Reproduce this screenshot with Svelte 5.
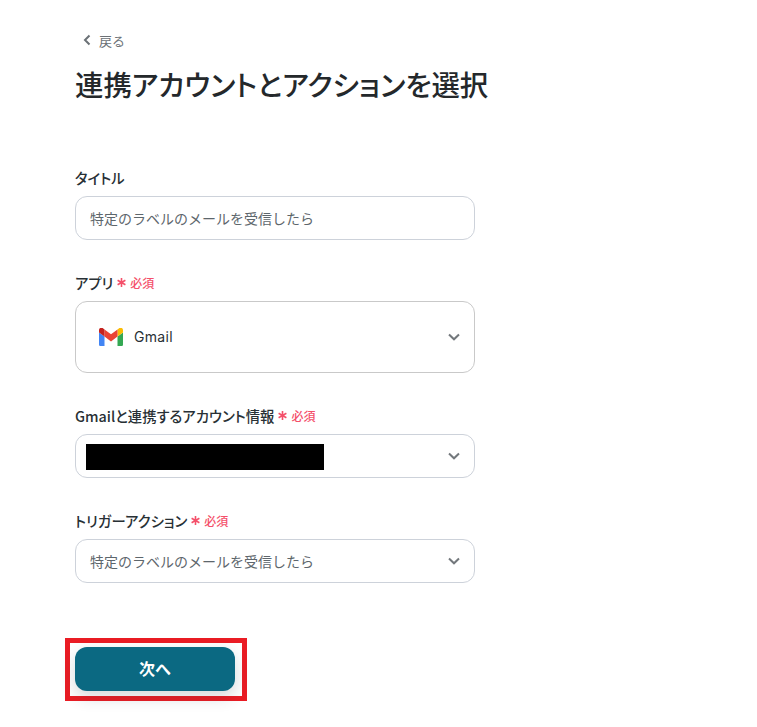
<script lang="ts">
    const triggerName = "特定のラベルのメールを受信したら";
</script>

{#snippet chevron()}
    <svg class="chevron" width="12" height="8" viewBox="0 0 12 8"><path d="M1 1.5 6 6.3 11 1.5" fill="none" stroke="currentColor" stroke-width="2"/></svg>
{/snippet}

{#snippet required()}
    <svg class="star" width="9" height="9" viewBox="0 0 9 9"><path d="M4.5 0V9M.6 2.25 8.4 6.75M.6 6.75 8.4 2.25" fill="none" stroke="currentColor" stroke-width="1.6"/></svg>
    <em>必須</em>
{/snippet}

<main class="page">
    <a class="back" href="#back">
        <svg width="10" height="12" viewBox="0 0 10 12"><path d="M7.5 1.5 3 6l4.5 4.5" fill="none" stroke="currentColor" stroke-width="2"/></svg>
        <span>戻る</span>
    </a>
    <h1>連携アカウントとアクションを選択</h1>

    <section class="field first">
        <div class="label"><span>タイトル</span></div>
        <div class="box"><span>{triggerName}</span></div>
    </section>

    <section class="field">
        <div class="label"><span>アプリ</span>{@render required()}</div>
        <div class="box tall">
            <svg class="gmail" width="24" height="18" viewBox="0 0 24 18">
                <path d="M1.6 18H5.5V8.5L0 4.4V16.4C0 17.3.7 18 1.6 18Z" fill="#4285f4"/>
                <path d="M18.5 18H22.4C23.3 18 24 17.3 24 16.4V4.4L18.5 8.5Z" fill="#34a853"/>
                <path d="M18.5 1.4V8.5L24 4.4V2.2C24 .2 21.7-1 20.1.2Z" fill="#fbbc04"/>
                <path d="M5.5 8.5V1.4L12 6.3 18.5 1.4V8.5L12 13.4Z" fill="#ea4335"/>
                <path d="M0 2.2V4.4L5.5 8.5V1.4L3.9.2C2.3-1 0 .2 0 2.2Z" fill="#c5221f"/>
            </svg>
            <span class="app-name">Gmail</span>
            {@render chevron()}
        </div>
    </section>

    <section class="field">
        <div class="label"><span>Gmailと連携するアカウント情報</span>{@render required()}</div>
        <div class="box redacted-box">
            <div class="redacted"></div>
            {@render chevron()}
        </div>
    </section>

    <section class="field">
        <div class="label"><span>トリガーアクション</span>{@render required()}</div>
        <div class="box">
            <span>{triggerName}</span>
            {@render chevron()}
        </div>
    </section>

    <div class="next-wrap">
        <button class="next">次へ</button>
    </div>
</main>

<style>
    :global(body) {
        background: #fff;
    }

    .page {
        box-sizing: border-box;
        width: 757px;
        height: 727px;
        overflow: hidden;
        padding: 30px 0 0 75px;
        font-family: "Noto Sans CJK JP", "Noto Sans", sans-serif;
        color: #283035;
    }

    .back {
        display: flex;
        align-items: center;
        gap: 7px;
        height: 20px;
        padding-left: 7px;
        font-size: 13px;
        color: #6b7176;
        text-decoration: none;
    }

    h1 {
        margin: 14px 0 0;
        font-size: 28.4px;
        line-height: 40px;
        font-weight: 500;
        color: #24282b;
        font-feature-settings: "palt";
    }

    .field {
        margin-top: 33px;
    }

    .field.first {
        margin-top: 64px;
    }

    .label {
        display: flex;
        align-items: center;
        height: 18px;
        margin-bottom: 10px;
        font-size: 14.35px;
        font-weight: 500;
        font-feature-settings: "palt";
    }

    .star {
        margin-left: 4px;
        color: #f4506a;
    }

    .label em {
        margin-left: 4px;
        font-style: normal;
        font-size: 12px;
        font-weight: 500;
        color: #f4506a;
    }

    .box {
        box-sizing: border-box;
        position: relative;
        display: flex;
        align-items: center;
        width: 400px;
        height: 44px;
        padding: 0 14px;
        border: 1px solid #cdd2da;
        border-radius: 12px;
        font-size: 14px;
        color: #5d666c;
    }

    .box.tall {
        height: 72px;
        padding-left: 23px;
        border-color: #c9c9c9;
    }

    .box.redacted-box {
        padding-left: 10px;
    }

    .redacted {
        width: 238px;
        height: 26px;
        margin-top: 1px;
        background: #000;
    }

    .gmail {
        flex: none;
    }

    .app-name {
        margin-left: 11px;
        margin-top: -1px;
        font-family: "Inter", "Noto Sans", sans-serif;
        font-size: 14px;
        letter-spacing: 0.3px;
        color: #283035;
    }

    .chevron {
        position: absolute;
        right: 14px;
        top: 50%;
        margin-top: -4px;
        color: #73787c;
    }

    .next-wrap {
        box-sizing: border-box;
        display: block;
        width: 182px;
        height: 63px;
        margin-top: 55px;
        margin-left: -10px;
        padding: 4px 0 0 5px;
        border: 5px solid #ea1c24;
    }

    .next {
        display: block;
        width: 160px;
        height: 44px;
        padding: 0 0 2px;
        border: none;
        border-radius: 12px;
        background: #0b6982;
        color: #fff;
        font-family: inherit;
        font-size: 16px;
        font-weight: 700;
        box-shadow: 0 6px 16px rgba(40, 60, 70, 0.2);
    }
</style>
